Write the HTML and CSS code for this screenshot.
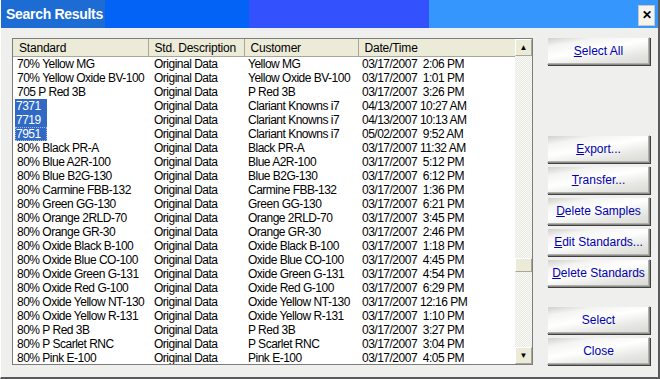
FILE: index.html
```html
<!DOCTYPE html>
<html lang="en">
<head>
  <meta charset="UTF-8" />
  <title>Search Results</title>
  <link rel="stylesheet" href="styles.css">
</head>
<body>
  <div class="window">
    <div class="titlebar">
      <span class="title">Search Results</span>
      <span class="close-btn">✕</span>
    </div>
    <div class="content">
      <div class="listbox">
        <div class="list">
          <table class="grid">
            <colgroup>
              <col class="c1"><col class="c2"><col class="c3"><col class="c4">
            </colgroup>
            <thead>
              <tr><th>Standard</th><th>Std. Description</th><th>Customer</th><th>Date/Time</th></tr>
            </thead>
            <tbody id="rows"></tbody>
          </table>
        </div>
        <div class="scrollbar">
          <div class="sb-btn">▲</div>
          <div class="sb-track"><div class="sb-thumb"></div></div>
          <div class="sb-btn">▼</div>
        </div>
      </div>
      <div class="buttons">
        <button class="btn" id="selectAll"><u>S</u>elect All</button>
        <button class="btn gap-lg"><u>E</u>xport...</button>
        <button class="btn"><u>T</u>ransfer...</button>
        <button class="btn"><u>D</u>elete Samples</button>
        <button class="btn"><u>E</u>dit Standards...</button>
        <button class="btn"><u>D</u>elete Standards</button>
        <button class="btn gap-md">Select</button>
        <button class="btn">Close</button>
      </div>
    </div>
  </div>
  <script>
    const data = [
      ['70% Yellow MG', 'Yellow MG', '03/17/2007  2:06 PM'],
      ['70% Yellow Oxide BV-100', 'Yellow Oxide BV-100', '03/17/2007  1:01 PM'],
      ['705 P Red 3B', 'P Red 3B', '03/17/2007  3:26 PM'],
      ['7371', 'Clariant Knowns i7', '04/13/2007 10:27 AM', 'sel'],
      ['7719', 'Clariant Knowns i7', '04/13/2007 10:13 AM', 'sel'],
      ['7951', 'Clariant Knowns i7', '05/02/2007  9:52 AM', 'sel focus'],
      ['80% Black PR-A', 'Black PR-A', '03/17/2007 11:32 AM'],
      ['80% Blue A2R-100', 'Blue A2R-100', '03/17/2007  5:12 PM'],
      ['80% Blue B2G-130', 'Blue B2G-130', '03/17/2007  6:12 PM'],
      ['80% Carmine FBB-132', 'Carmine FBB-132', '03/17/2007  1:36 PM'],
      ['80% Green GG-130', 'Green GG-130', '03/17/2007  6:21 PM'],
      ['80% Orange 2RLD-70', 'Orange 2RLD-70', '03/17/2007  3:45 PM'],
      ['80% Orange GR-30', 'Orange GR-30', '03/17/2007  2:46 PM'],
      ['80% Oxide Black B-100', 'Oxide Black B-100', '03/17/2007  1:18 PM'],
      ['80% Oxide Blue CO-100', 'Oxide Blue CO-100', '03/17/2007  4:45 PM'],
      ['80% Oxide Green G-131', 'Oxide Green G-131', '03/17/2007  4:54 PM'],
      ['80% Oxide Red G-100', 'Oxide Red G-100', '03/17/2007  6:29 PM'],
      ['80% Oxide Yellow NT-130', 'Oxide Yellow NT-130', '03/17/2007 12:16 PM'],
      ['80% Oxide Yellow R-131', 'Oxide Yellow R-131', '03/17/2007  1:10 PM'],
      ['80% P Red 3B', 'P Red 3B', '03/17/2007  3:27 PM'],
      ['80% P Scarlet RNC', 'P Scarlet RNC', '03/17/2007  3:04 PM'],
      ['80% Pink E-100', 'Pink E-100', '03/17/2007  4:05 PM']
    ];

    const tbody = document.getElementById('rows');
    data.forEach(function (r) {
      const tr = document.createElement('tr');
      const std = r[3] ? '<span class="' + r[3] + '">' + r[0] + '</span>' : r[0];
      tr.innerHTML = '<td>' + std + '</td><td>Original Data</td><td>' + r[1] +
        '</td><td class="dt">' + r[2] + '</td>';
      tbody.appendChild(tr);
    });
  </script>
</body>
</html>
```

FILE: styles.css
```css
body {
  margin: 0;
  padding: 0;
  font-family: "Liberation Sans", Arial, sans-serif;
  background-color: #f0f0ee;
}

.window {
  width: 660px;
  height: 379px;
  box-sizing: border-box;
  border-right: 2px solid #5a5a5a;
  border-bottom: 2px solid #5a5a5a;
  border-left: 1px solid #fff;
  background-color: #efefed;
  display: flex;
  flex-direction: column;
}

.titlebar {
  height: 28px;
  display: flex;
  align-items: center;
  justify-content: space-between;
  padding: 0 3px 0 5px;
  background: linear-gradient(to right,
    #1c6cd4 0, #1c6cd4 104px,
    #0363f6 104px, #0363f6 248px,
    #3352fe 248px, #3352fe 428px,
    #3597fd 428px, #3597fd 100%);
}

.title {
  color: #fff;
  font-family: "Liberation Sans", Arial, sans-serif;
  font-weight: bold;
  font-size: 14px;
  letter-spacing: -0.3px;
}

.close-btn {
  width: 15px;
  height: 19px;
  margin-top: 2px;
  background-color: #f4f4ee;
  border: 1px solid #c8c8c0;
  color: #000;
  font-weight: bold;
  font-size: 12px;
  line-height: 19px;
  text-align: center;
}

.content {
  flex: 1;
  display: flex;
  padding: 10px 0 0 11px;
  gap: 14px;
}

.listbox {
  width: 519px;
  height: 325px;
  border: 1px solid #7d7d7d;
  background-color: #fff;
  display: flex;
}

.list {
  flex: 1;
  overflow: hidden;
}

.grid {
  border-collapse: collapse;
  table-layout: fixed;
  width: 502px;
  font-size: 12px;
  letter-spacing: -0.5px;
  color: #000;
}

.c1 { width: 135px; }
.c2 { width: 96px; }
.c3 { width: 114px; }
.c4 { width: 157px; }

.grid th {
  height: 17px;
  padding: 0 0 0 6px;
  text-align: left;
  font-weight: normal;
  letter-spacing: -0.2px;
  background-color: #ecebd8;
  border-right: 1px solid #a8a79a;
  border-bottom: 1px solid #a8a79a;
  white-space: nowrap;
}

.grid td {
  height: 14px;
  line-height: 14px;
  padding: 0 0 0 4px;
  white-space: nowrap;
  overflow: hidden;
}

.grid td:nth-child(2) {
  padding-left: 6px;
}

.grid td.dt {
  padding-left: 4px;
  white-space: pre;
}

.sel {
  background-color: #316ac5;
  color: #fff;
  padding: 0 2px 0 1px;
  margin-left: -2px;
  display: inline-block;
  width: 29px;
}

.focus {
  outline: 1px dotted #a0b8e0;
  outline-offset: -1px;
}

.scrollbar {
  width: 17px;
  display: flex;
  flex-direction: column;
  background-color: #f1f1ec;
  background-image: repeating-conic-gradient(#e8e8e2 0 25%, #fafaf6 0 50%);
  background-size: 2px 2px;
}

.sb-btn {
  height: 17px;
  box-sizing: border-box;
  background-color: #ecebd8;
  border: 1px solid #a8a79a;
  border-top-color: #fff;
  border-left-color: #fff;
  font-size: 8px;
  line-height: 15px;
  text-align: center;
  color: #000;
}

.sb-track {
  flex: 1;
  position: relative;
}

.sb-thumb {
  position: absolute;
  left: 0;
  right: 0;
  top: 202px;
  height: 12px;
  background-color: #ecebd8;
  border: 1px solid #a8a79a;
  border-top-color: #fff;
  border-left-color: #fff;
}

.buttons {
  display: flex;
  flex-direction: column;
  gap: 3px;
  width: 103px;
  margin-top: -1px;
}

.btn {
  height: 28px;
  font-family: "Liberation Sans", Arial, sans-serif;
  font-size: 12px;
  color: #0000b0;
  background: linear-gradient(170deg, #d0d0cc 0, #f4f4f2 20%, #ffffff 45%, #e6e6e2 75%, #d8d8d4 100%);
  border: 1px solid #8a8a86;
  border-top-color: #f0f0f0;
  border-left-color: #f0f0f0;
  box-shadow: 1px 1px 0 #404040, inset -1px -1px 0 #b0b0ac;
  padding: 0;
  cursor: pointer;
}

.btn u {
  text-decoration: underline;
}

.gap-lg {
  margin-top: 67px;
}

.gap-md {
  margin-top: 16px;
}
```
